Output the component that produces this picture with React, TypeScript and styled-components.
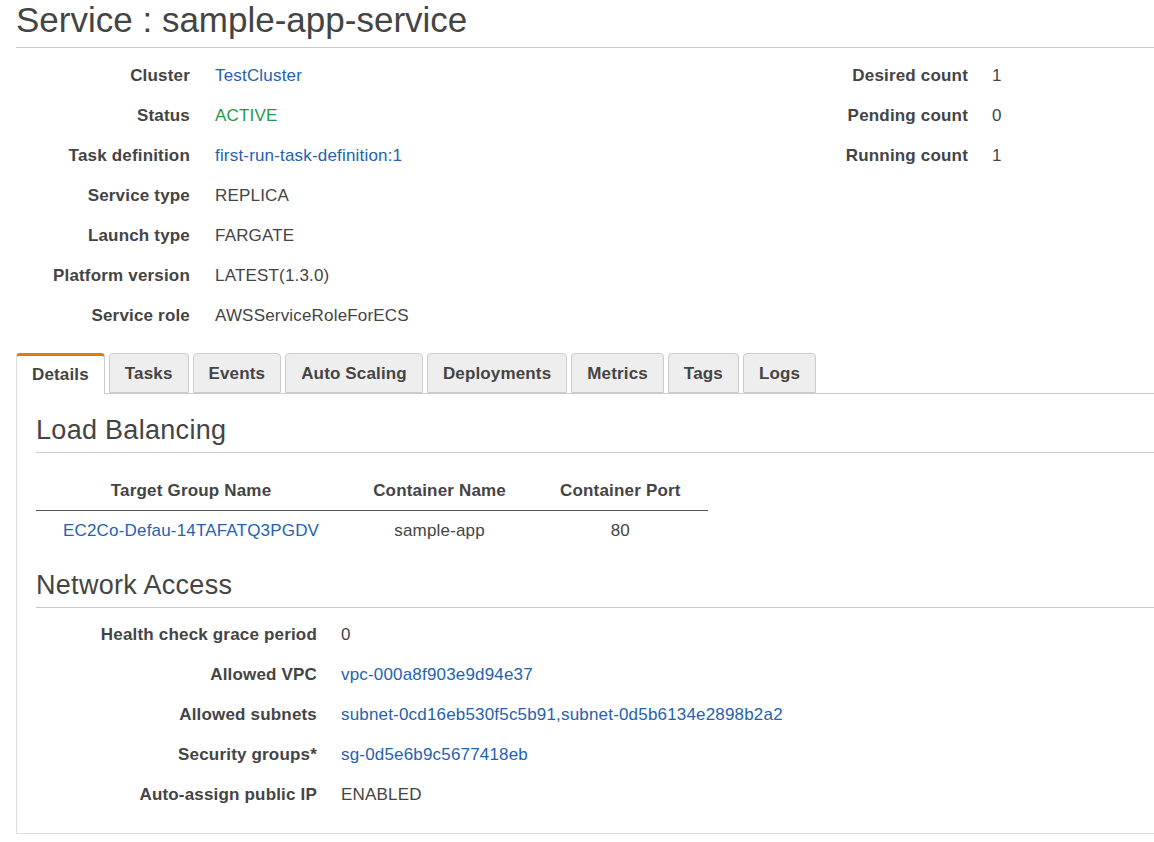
import React from "react";
import styled, { createGlobalStyle } from "styled-components";

const Global = createGlobalStyle`
  html, body { margin: 0; padding: 0; background: #fff; }
  body {
    font-family: "Liberation Sans", Arial, Helvetica, sans-serif;
    color: #444;
    overflow: hidden;
  }
`;

const Page = styled.div`
  width: 1154px;
  height: 842px;
  overflow: hidden;
  padding-left: 16px;
  box-sizing: border-box;
`;

const Wide = styled.div`
  width: 1160px;
`;

const Title = styled.h1`
  margin: 0;
  font-size: 35px;
  line-height: 40px;
  font-weight: normal;
  color: #444;
  padding-bottom: 7px;
  border-bottom: 1px solid #ccc;
`;

const Summary = styled.div`
  display: flex;
  margin-top: 8px;
`;

const DefList = styled.div<{ $label: number; $width?: number; $gap?: number }>`
  display: grid;
  grid-template-columns: ${(p) => p.$label}px 1fr;
  column-gap: ${(p) => p.$gap ?? 25}px;
  grid-auto-rows: 40px;
  align-items: center;
  ${(p) => (p.$width ? `width: ${p.$width}px;` : "flex: 1;")}
  font-size: 17px;
  letter-spacing: 0.18px;
`;

const Label = styled.div`
  text-align: right;
  font-weight: bold;
  color: #444;
  white-space: nowrap;
`;

const Value = styled.div<{ $tone?: "link" | "ok" }>`
  white-space: nowrap;
  color: ${(p) => (p.$tone === "link" ? "#2462ae" : p.$tone === "ok" ? "#1e9a48" : "#444")};
`;

const Tabs = styled.div`
  display: flex;
  gap: 4px;
  margin-top: 17px;
  height: 40px;
  position: relative;
  z-index: 1;
`;

const Tab = styled.div<{ $active?: boolean }>`
  box-sizing: border-box;
  height: ${(p) => (p.$active ? "41px" : "40px")};
  padding: ${(p) => (p.$active ? "0 15px 1px" : "2px 15px 0")};
  display: flex;
  align-items: center;
  font-size: 17px;
  letter-spacing: 0.15px;
  font-weight: bold;
  color: #444;
  border: 1px solid #ccc;
  border-bottom: ${(p) => (p.$active ? "none" : "1px solid #ccc")};
  border-top: ${(p) => (p.$active ? "3px solid #e07b0e" : "1px solid #ccc")};
  border-radius: 4px 4px 0 0;
  background: ${(p) => (p.$active ? "#fff" : "#eeeeee")};
  ${(p) => (p.$active ? "border-left-color: #ddd;" : "")}
`;

const Panel = styled.div`
  border: 1px solid #ddd;
  border-top: 1px solid #ccc;
  border-right: none;
  padding: 0 0 18px 19px;
`;

const SectionTitle = styled.h2<{ $top: number }>`
  margin: ${(p) => p.$top}px 0 0 0;
  font-size: 27px;
  letter-spacing: 0.3px;
  line-height: 30px;
  font-weight: normal;
  color: #444;
  padding-bottom: 7px;
  border-bottom: 1px solid #ccc;
`;

const Table = styled.table`
  border-collapse: collapse;
  margin-top: 18px;
  font-size: 17px;
  letter-spacing: 0.18px;
`;

const Th = styled.th`
  height: 39px;
  padding: 0 27px;
  font-weight: bold;
  text-align: center;
  color: #444;
  border-bottom: 1px solid #555;
  white-space: nowrap;
`;

const Td = styled.td<{ $link?: boolean }>`
  height: 39px;
  padding: 0 27px;
  text-align: center;
  color: ${(p) => (p.$link ? "#2462ae" : "#444")};
  white-space: nowrap;
`;

const NetList = styled(DefList)`
  margin-top: 7px;
`;

type Row = [string, string, ("link" | "ok")?];

const left: Row[] = [
  ["Cluster", "TestCluster", "link"],
  ["Status", "ACTIVE", "ok"],
  ["Task definition", "first-run-task-definition:1", "link"],
  ["Service type", "REPLICA"],
  ["Launch type", "FARGATE"],
  ["Platform version", "LATEST(1.3.0)"],
  ["Service role", "AWSServiceRoleForECS"],
];

const right: Row[] = [
  ["Desired count", "1"],
  ["Pending count", "0"],
  ["Running count", "1"],
];

const net: Row[] = [
  ["Health check grace period", "0"],
  ["Allowed VPC", "vpc-000a8f903e9d94e37", "link"],
  ["Allowed subnets", "subnet-0cd16eb530f5c5b91,subnet-0d5b6134e2898b2a2", "link"],
  ["Security groups*", "sg-0d5e6b9c5677418eb", "link"],
  ["Auto-assign public IP", "ENABLED"],
];

const tabs = ["Details", "Tasks", "Events", "Auto Scaling", "Deployments", "Metrics", "Tags", "Logs"];

const renderRows = (rows: Row[]) =>
  rows.map(([l, v, t]) => (
    <React.Fragment key={l}>
      <Label>{l}</Label>
      <Value $tone={t}>{v}</Value>
    </React.Fragment>
  ));

export default function App() {
  return (
    <Page>
      <Global />
      <Wide>
        <Title>Service : sample-app-service</Title>
        <Summary>
          <DefList $label={174} $width={785}>{renderRows(left)}</DefList>
          <DefList $label={167} $gap={24}>{renderRows(right)}</DefList>
        </Summary>
        <Tabs>
          {tabs.map((t, i) => (
            <Tab key={t} $active={i === 0}>
              {t}
            </Tab>
          ))}
        </Tabs>
        <Panel>
          <SectionTitle $top={21}>Load Balancing</SectionTitle>
          <Table>
            <thead>
              <tr>
                <Th>Target Group Name</Th>
                <Th>Container Name</Th>
                <Th>Container Port</Th>
              </tr>
            </thead>
            <tbody>
              <tr>
                <Td $link>EC2Co-Defau-14TAFATQ3PGDV</Td>
                <Td>sample-app</Td>
                <Td>80</Td>
              </tr>
            </tbody>
          </Table>
          <SectionTitle $top={20}>Network Access</SectionTitle>
          <NetList $label={281} $gap={24}>{renderRows(net)}</NetList>
        </Panel>
      </Wide>
    </Page>
  );
}
